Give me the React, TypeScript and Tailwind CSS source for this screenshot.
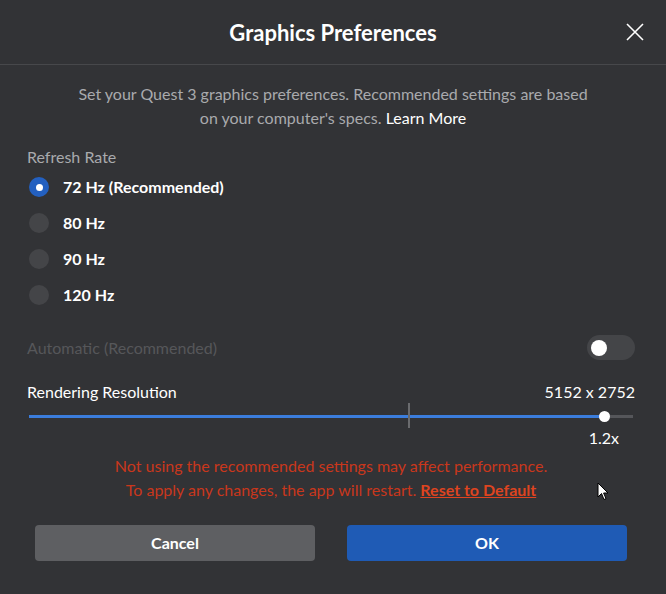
import React from "react";

const rates = [
  {label: "72 Hz (Recommended)", selected: true},
  {label: "80 Hz", selected: false},
  {label: "90 Hz", selected: false},
  {label: "120 Hz", selected: false},
];

const Radio = ({selected}: {selected: boolean}) =>
  selected ? (
    <span className="flex items-center justify-center size-[20px] rounded-full bg-[#2360c0]">
      <span className="size-[7px] rounded-full bg-white" />
    </span>
  ) : (
    <span className="size-[20px] rounded-full bg-[#444548]" />
  );

const App = () => {
  return (
    <div
      className="relative w-[666px] h-[594px] bg-[#323336] text-white overflow-hidden"
      style={{fontFamily: 'Lato, "Open Sans", sans-serif'}}
    >
      {/* header */}
      <div className="relative flex items-center justify-center h-[65px] border-b border-[#47484b]">
        <h1 className="text-[22px] font-bold leading-[30px] mt-[1px]">Graphics Preferences</h1>
        <button className="absolute right-[22px] top-[23px]">
          <svg width="18" height="18" viewBox="0 0 18 18" fill="none" stroke="white" strokeWidth="1.6">
            <path d="M1 1L17 17M17 1L1 17" />
          </svg>
        </button>
      </div>

      <p className="mt-[17px] px-[50px] text-center text-[16px] leading-[24px] text-[#a9aaad]">
        Set your Quest 3 graphics preferences. Recommended settings are based
        <br />
        on your computer's specs. <span className="text-white">Learn More</span>
      </p>

      <div className="pl-[27px] pr-[31px] text-[16px]">
        <div className="mt-[15px] leading-[24px] text-[#a9aaad]">Refresh Rate</div>
        <div className="mt-[8px] flex flex-col gap-[16px]">
          {rates.map((r) => (
            <div key={r.label} className="flex items-center gap-[14px] h-[20px] pl-[2px]">
              <Radio selected={r.selected} />
              <span className="font-bold">{r.label}</span>
            </div>
          ))}
        </div>

        <div className="mt-[30px] flex items-center justify-between">
          <span className="text-[#56575a]">Automatic (Recommended)</span>
          <span className="flex items-center w-[48px] h-[25px] rounded-full bg-[#444548] pl-[4px]">
            <span className="size-[16px] rounded-full bg-white" />
          </span>
        </div>

        <div className="mt-[21px] flex items-center justify-between leading-[22px]">
          <span>Rendering Resolution</span>
          <span>5152 x 2752</span>
        </div>

        <div className="relative h-[26px] ml-[2px] mr-[2px]">
          <div className="absolute left-0 right-0 top-[12px] h-[3px] bg-[#55565a]" />
          <div className="absolute left-0 w-[575px] top-[12px] h-[3px] bg-[#3b7ddc]" />
          <div className="absolute left-[379px] top-0 w-[2px] h-[25px] bg-[#6a6b6e]" />
          <div className="absolute left-[570px] top-[8px] size-[11px] rounded-full bg-white" />
        </div>
        <div className="flex justify-end pr-[16px] leading-[18px]">1.2x</div>

        <div className="mt-[7px] text-center leading-[24px] text-[#c9371c]">
          <div>Not using the recommended settings may affect performance.</div>
          <div>
            To apply any changes, the app will restart.{" "}
            <span className="font-bold underline text-[#de4420]">Reset to Default</span>
          </div>
        </div>
      </div>

      <div className="mt-[23px] flex gap-[32px] px-[35px]">
        <button className="w-[280px] h-[36px] rounded-[4px] bg-[#5e5f62] text-[16px] font-bold">Cancel</button>
        <button className="w-[280px] h-[36px] rounded-[4px] bg-[#1f5bb5] text-[16px] font-bold">OK</button>
      </div>

      {/* mouse pointer captured in screenshot */}
      <svg className="absolute left-[597px] top-[482px]" width="12" height="19" viewBox="0 0 12 19">
        <path d="M1 1V15L4.5 11.5L7 17.5L9 16.6L6.6 11H11Z" fill="white" stroke="black" strokeWidth="1" />
      </svg>
    </div>
  );
};

export default App;
